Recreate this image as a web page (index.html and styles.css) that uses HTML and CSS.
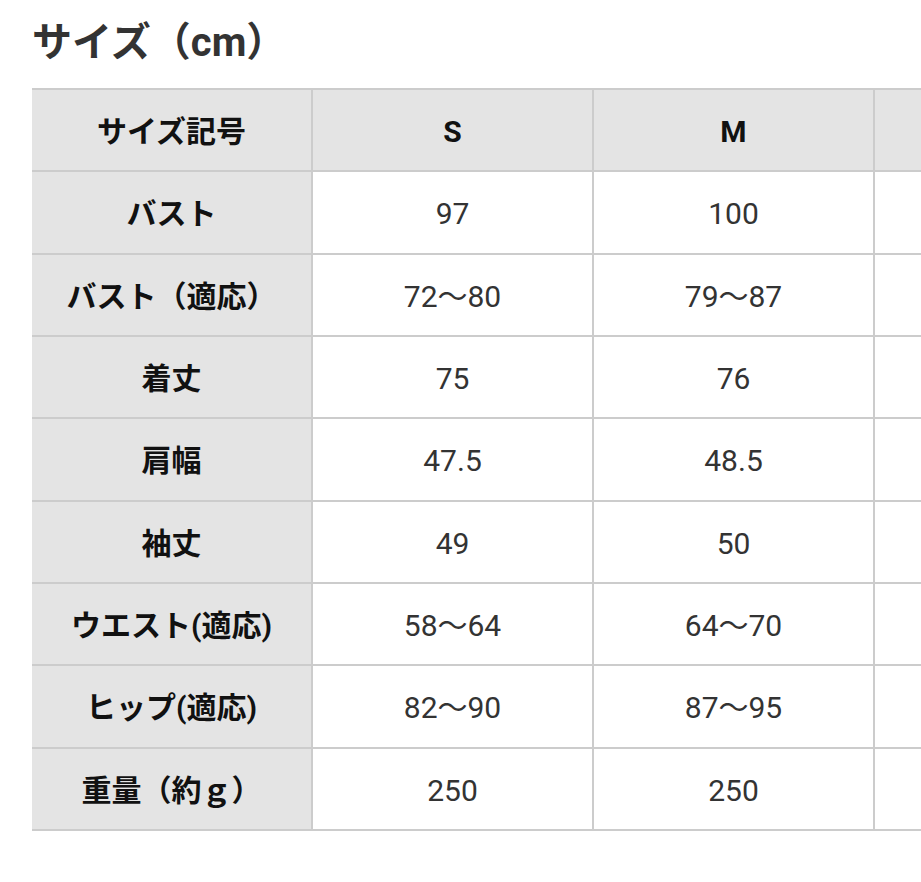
FILE: index.html
```html
<!DOCTYPE html>
<html lang="ja">
<head>
<meta charset="utf-8">
<title>サイズ（cm）</title>
<link rel="stylesheet" href="styles.css">
</head>
<body>
<div class="page">
  <h2 class="title">サイズ（cm）</h2>
  <div class="table-wrap">
    <table class="size-table">
      <thead>
        <tr><th>サイズ記号</th><th>S</th><th>M</th><th>L</th></tr>
      </thead>
      <tbody>
        <tr><th>バスト</th><td>97</td><td>100</td><td>103</td></tr>
        <tr><th>バスト（適応）</th><td>72～80</td><td>79～87</td><td>86～94</td></tr>
        <tr><th>着丈</th><td>75</td><td>76</td><td>77</td></tr>
        <tr><th>肩幅</th><td>47.5</td><td>48.5</td><td>49.5</td></tr>
        <tr><th>袖丈</th><td>49</td><td>50</td><td>51</td></tr>
        <tr><th>ウエスト(適応)</th><td>58～64</td><td>64～70</td><td>70～76</td></tr>
        <tr><th>ヒップ(適応)</th><td>82～90</td><td>87～95</td><td>92～100</td></tr>
        <tr><th>重量（約ｇ）</th><td>250</td><td>250</td><td>250</td></tr>
      </tbody>
    </table>
  </div>
</div>
</body>
</html>
```

FILE: styles.css
```css
html, body {
  margin: 0;
  padding: 0;
  background: #ffffff;
  overflow: hidden;
}

body {
  font-family: Roboto, "Noto Sans CJK JP", sans-serif;
  color: #333333;
}

.page {
  width: 921px;
  height: 882px;
  padding-left: 32px;
  box-sizing: border-box;
  overflow: hidden;
}

.title {
  margin: 0;
  padding-top: 21px;
  height: 88px;
  box-sizing: border-box;
  font-size: 40px;
  line-height: 44px;
  font-weight: 700;
  color: #333333;
}

.table-wrap {
  width: 1124px;
}

.size-table {
  border-collapse: separate;
  border-spacing: 0;
  table-layout: fixed;
  width: 1124px;
  border-top: 2px solid #cccccc;
}

.size-table th,
.size-table td {
  width: 281px;
  height: 82.33px;
  box-sizing: border-box;
  padding: 4px 0 0;
  border-right: 2px solid #cccccc;
  border-bottom: 2px solid #cccccc;
  text-align: center;
  vertical-align: middle;
  font-size: 30px;
  line-height: 1.2;
}

.size-table th {
  background: #e4e4e4;
  font-weight: 700;
  color: #111111;
}

.size-table td {
  background: #ffffff;
  font-weight: 400;
  color: #333333;
}
```
